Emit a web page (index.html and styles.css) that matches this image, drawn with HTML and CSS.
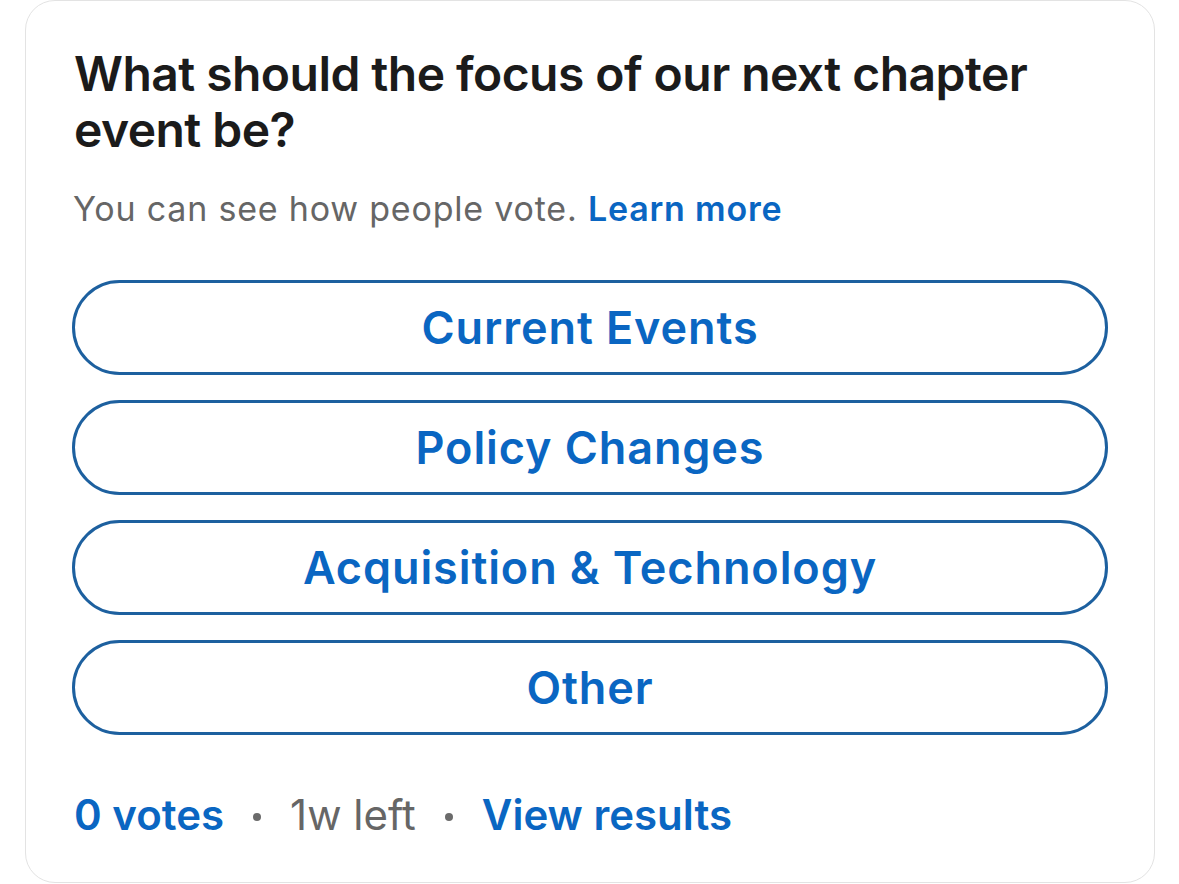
FILE: index.html
```html
<!DOCTYPE html>
<html lang="en">
<head>
<meta charset="utf-8">
<title>Poll</title>
<link rel="stylesheet" href="styles.css">
</head>
<body>
<div class="card">
  <h1 class="question">What should the focus of our next chapter event be?</h1>
  <p class="note">You can see how people vote. <a class="link" href="#">Learn more</a></p>
  <div class="options">
    <button class="option">Current Events</button>
    <button class="option">Policy Changes</button>
    <button class="option">Acquisition &amp; Technology</button>
    <button class="option">Other</button>
  </div>
  <div class="meta">
    <span class="votes">0 votes</span>
    <span class="dot" aria-hidden="true"></span>
    <span class="left">1w left</span>
    <span class="dot" aria-hidden="true"></span>
    <a class="results" href="#">View results</a>
  </div>
</div>
</body>
</html>
```
FILE: styles.css
```css
html, body {
  margin: 0;
  padding: 0;
  background: #ffffff;
}
body {
  font-family: Inter, "Noto Sans", "Liberation Sans", sans-serif;
  width: 1179px;
  height: 884px;
  overflow: hidden;
}
.card {
  box-sizing: border-box;
  margin-left: 25px;
  width: 1130px;
  height: 883px;
  border: 1.5px solid #e3e3e3;
  border-radius: 30px;
  padding: 45px 46px 0 46px;
}
.question {
  margin: 0;
  font-size: 48px;
  line-height: 56px;
  font-weight: 600;
  letter-spacing: -0.55px;
  color: #1b1b1b;
  padding-left: 2px;
}
.note {
  margin: 31px 0 0 0;
  font-size: 34px;
  line-height: 40px;
  letter-spacing: 0.8px;
  color: #666666;
  padding-left: 1px;
}
.link {
  color: #0a66c2;
  font-weight: 600;
  text-decoration: none;
}
.options {
  margin-top: 51px;
  display: flex;
  flex-direction: column;
  gap: 25px;
}
.option {
  box-sizing: border-box;
  height: 95px;
  width: 100%;
  border: 3px solid #1d609f;
  border-radius: 48px;
  background: #ffffff;
  color: #0a66c2;
  font-family: inherit;
  font-size: 45px;
  font-weight: 600;
  letter-spacing: 0.9px;
  display: flex;
  align-items: center;
  justify-content: center;
  padding: 0;
}
.meta {
  margin-top: 55px;
  display: flex;
  align-items: center;
  font-size: 42px;
  line-height: 50px;
  padding-left: 2px;
}
.votes, .results {
  color: #0a66c2;
  font-weight: 600;
  text-decoration: none;
}
.left {
  color: #666666;
}
.dot {
  width: 8px;
  height: 8px;
  border-radius: 50%;
  background: #6b6b6b;
  margin: 4px 29px 0 29px;
}
```
